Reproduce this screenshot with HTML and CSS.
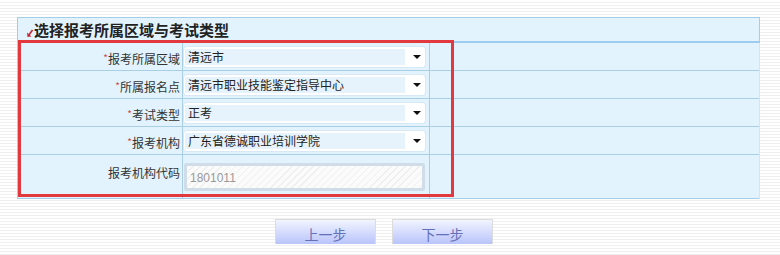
FILE: index.html
```html
<!DOCTYPE html>
<html lang="zh-CN">
	<head>
		<meta charset="UTF-8" />
		<title>选择报考所属区域与考试类型</title>
		<link rel="stylesheet" href="styles.css">
	</head>
	<body>
		<div class="page">
			<table class="form-table">
				<tr>
					<th colspan="3" class="title">
						<svg class="title-icon" width="6" height="8" viewBox="0 0 6 8">
							<path d="M5.5 1 L1.5 6.5" stroke="#c8283a" stroke-width="1.6" fill="none" />
							<path d="M0 3.5 L0.5 8 L4.5 7.5 Z" fill="#c8283a" />
						</svg>选择报考所属区域与考试类型
					</th>
				</tr>
				<tr>
					<td class="label"><span class="req">*</span>报考所属区域</td>
					<td class="field">
						<div class="sel"><span class="sel-text">清远市</span><span class="sel-arrow"></span></div>
					</td>
					<td class="rest"></td>
				</tr>
				<tr>
					<td class="label"><span class="req">*</span>所属报名点</td>
					<td class="field">
						<div class="sel"><span class="sel-text">清远市职业技能鉴定指导中心</span><span class="sel-arrow"></span></div>
					</td>
					<td class="rest"></td>
				</tr>
				<tr>
					<td class="label"><span class="req">*</span>考试类型</td>
					<td class="field">
						<div class="sel"><span class="sel-text">正考</span><span class="sel-arrow"></span></div>
					</td>
					<td class="rest"></td>
				</tr>
				<tr>
					<td class="label"><span class="req">*</span>报考机构</td>
					<td class="field">
						<div class="sel"><span class="sel-text">广东省德诚职业培训学院</span><span class="sel-arrow"></span></div>
					</td>
					<td class="rest"></td>
				</tr>
				<tr class="last">
					<td class="label">报考机构代码</td>
					<td class="field">
						<div class="code-input">1801011</div>
					</td>
					<td class="rest"></td>
				</tr>
			</table>
			<div class="mark"></div>
			<div class="actions">
				<button class="step-btn">上一步</button>
				<button class="step-btn">下一步</button>
			</div>
		</div>
	</body>
</html>
```

FILE: styles.css
```css
body {
	margin: 0;
	font-family: "Noto Sans CJK SC", "Liberation Sans", sans-serif;
	font-size: 12px;
	color: #333;
	background: repeating-linear-gradient(
		to bottom,
		#ffffff 0,
		#ffffff 2px,
		#efefef 2px,
		#efefef 3px
	);
	height: 255px;
	overflow: hidden;
}

.page {
	position: relative;
	padding: 17px 0 0 17px;
}

.form-table {
	width: 743px;
	border-collapse: collapse;
	background: #e2f3fe;
	border: 1px solid #a6cde6;
}

.form-table td {
	border-top: 1px solid #a9cfe6;
	height: 27px;
	padding: 0;
}

.title {
	height: 23px;
	text-align: left;
	padding: 0 0 0 9px;
	font-size: 15px;
	font-weight: bold;
	color: #222;
	border-bottom: 2px solid #9dccee;
	line-height: 22px;
}

.title-icon {
	vertical-align: -1px;
	margin-right: 1px;
}

.label {
	width: 162px;
	text-align: right;
	padding-right: 2px !important;
	border-right: 1px solid #a9cfe6;
	color: #333;
	vertical-align: bottom;
	line-height: 22px;
}

.req {
	color: #cc4b4b;
	font-size: 10px;
	vertical-align: 2px;
}

.field {
	width: 243px;
	border-right: 1px solid #a9cfe6;
	padding: 0 2px 0 1px !important;
}

.rest {
	border-right: 1px solid #cfe6f6;
}

.sel {
	display: flex;
	height: 20px;
	width: 241px;
	background: #fff;
	border-radius: 3px;
	box-shadow: 0 0 0 1px #d8e8f4;
	margin-top: 1px;
}

.sel-text {
	flex: 1;
	background: #e7f3fc;
	margin: 2px 0 2px 1px;
	padding-left: 3px;
	line-height: 16px;
	font-size: 12px;
	color: #222;
}

.sel-arrow {
	width: 20px;
	position: relative;
}

.sel-arrow::after {
	content: "";
	position: absolute;
	left: 8px;
	top: 8px;
	border-left: 4px solid transparent;
	border-right: 4px solid transparent;
	border-top: 4px solid #111;
}

.last td {
	height: 35px;
}

.last .label {
	vertical-align: middle;
	padding-bottom: 8px !important;
}

.code-input {
	box-sizing: border-box;
	width: 241px;
	height: 28px;
	border: 3px solid #d0dde9;
	border-radius: 2px;
	background: repeating-linear-gradient(
		135deg,
		#fbfbfb 0,
		#fbfbfb 4px,
		#efefef 4px,
		#efefef 5px
	);
	color: #9a9a9a;
	line-height: 24px;
	padding: 0 0 0 3px;
	font-size: 12px;
	font-family: "Liberation Sans", sans-serif;
}

.mark {
	position: absolute;
	left: 18px;
	top: 40px;
	width: 436px;
	height: 157px;
	box-sizing: border-box;
	border: 3px solid #e2393f;
}

.actions {
	display: flex;
	gap: 16px;
	margin: 20px 0 0 258px;
}

.step-btn {
	width: 101px;
	height: 25px;
	border: 1px solid #dcdcdc;
	border-bottom: none;
	background: linear-gradient(to bottom, #f2f4ff, #b9c4fb);
	color: #6470b8;
	font-family: "Noto Sans CJK SC", sans-serif;
	font-size: 14px;
	padding: 3px 0 0;
	cursor: pointer;
}
```
